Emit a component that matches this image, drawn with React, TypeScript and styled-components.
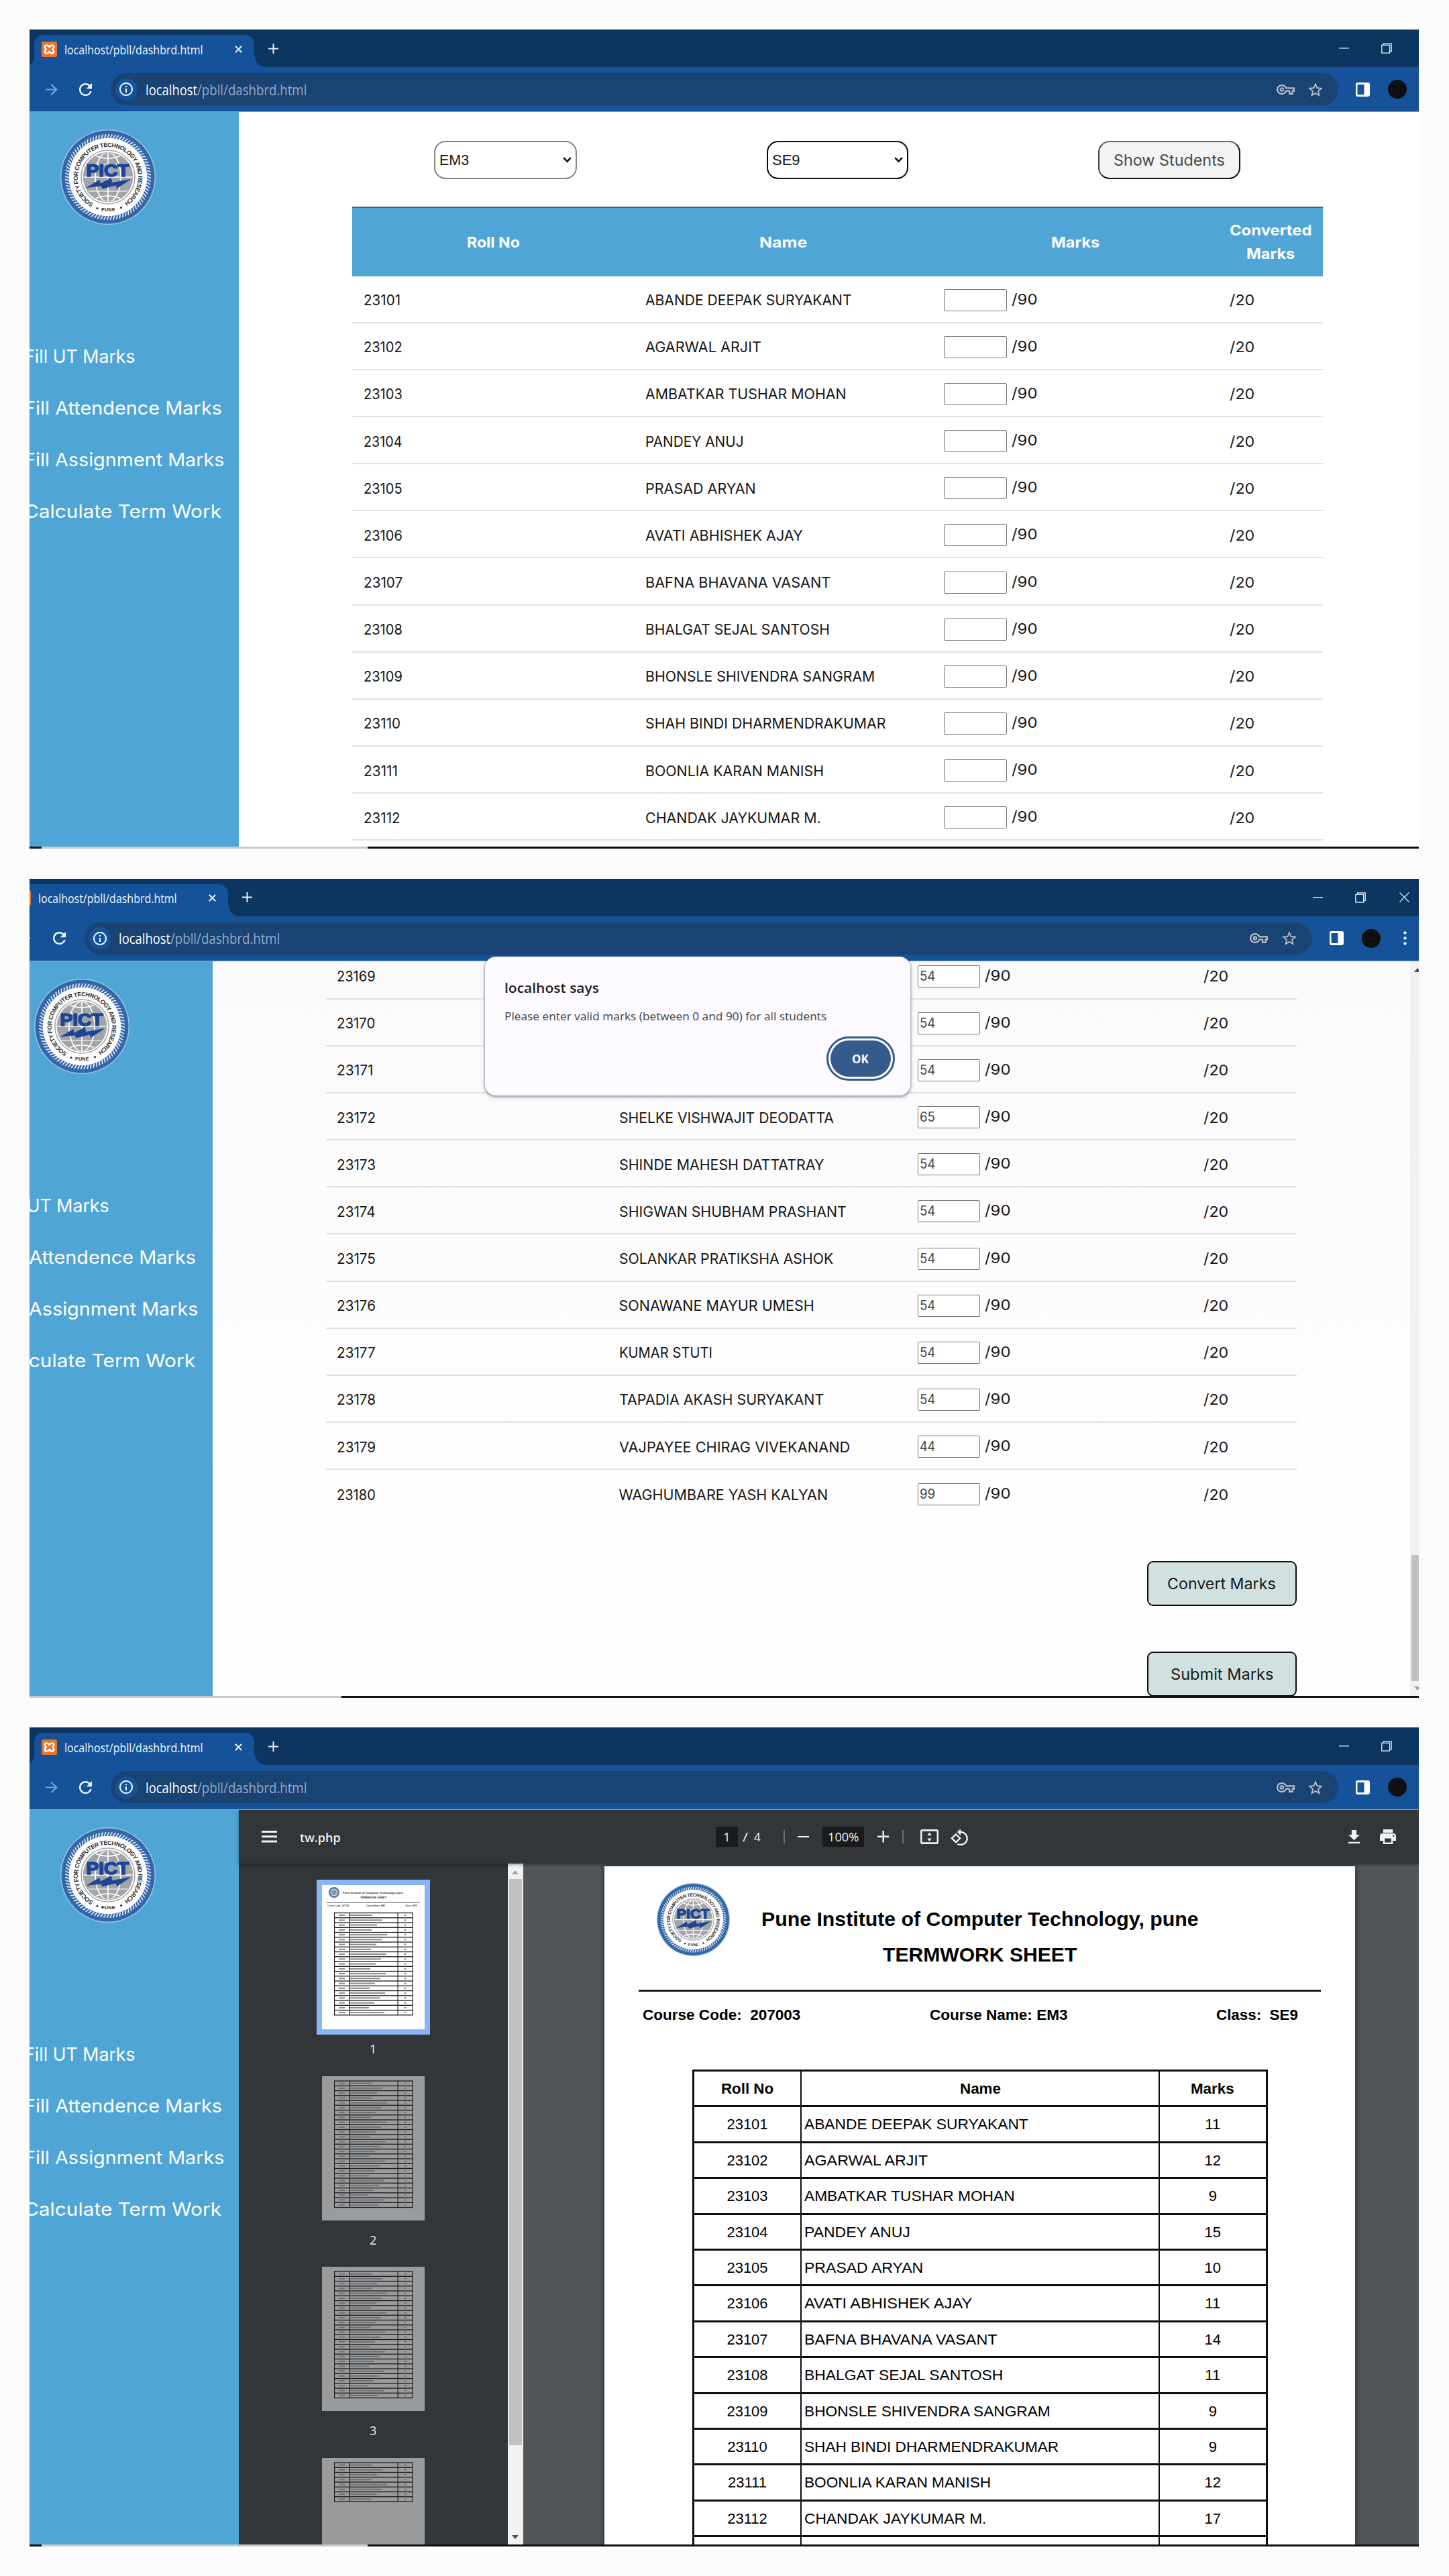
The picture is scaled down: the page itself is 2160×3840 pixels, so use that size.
import React, { useLayoutEffect, useRef, useState } from "react";
import styled, { createGlobalStyle } from "styled-components";

const geo = `Inter, "Open Sans", sans-serif`;
const ui = `"Open Sans", "Noto Sans", sans-serif`;
const arial = `"Liberation Sans", Arial, sans-serif`;

const GlobalStyle = createGlobalStyle`
  * { box-sizing: border-box; }
  body { margin: 0; background: #fcfcfc; }
`;

/* ---------- text that is stretched to a given width ---------- */

const FitSpan = styled.span<{ $w: number }>`
  display: inline-block;
  flex: none;
  width: ${(p) => p.$w}px;
  text-align: left;
  white-space: pre;
`;

const Stretch = styled.span`
  display: inline-block;
  transform-origin: 0 50%;
`;

function Fit({ w, children }: { w: number; children: string }) {
  const ref = useRef<HTMLSpanElement>(null);
  const [scale, setScale] = useState(1);
  useLayoutEffect(() => {
    if (ref.current && ref.current.offsetWidth) setScale(w / ref.current.offsetWidth);
  }, [w, children]);
  return (
    <FitSpan $w={w}>
      <Stretch ref={ref} style={{ transform: `scaleX(${scale})` }}>
        {children}
      </Stretch>
    </FitSpan>
  );
}

/* ---------- icons ---------- */

const Svg = styled.svg`
  display: block;
  flex: none;
`;

function Icon({ d, w, h, box, color }: { d: string; w: number; h: number; box: string; color: string }) {
  return (
    <Svg width={w} height={h} viewBox={box} preserveAspectRatio="none" fill={color}>
      <path d={d} />
    </Svg>
  );
}

const ARROW = "M12 4l-1.41 1.41L16.17 11H4v2h12.17l-5.58 5.59L12 20l8-8z";
const REFRESH =
  "M17.65 6.35C16.2 4.9 14.21 4 12 4c-4.42 0-7.99 3.58-7.99 8s3.57 8 7.99 8c3.73 0 6.84-2.55 7.73-6h-2.08c-.82 2.33-3.04 4-5.65 4-3.31 0-6-2.69-6-6s2.69-6 6-6c1.66 0 3.14.69 4.22 1.78L13 11h7V4l-2.35 2.35z";
const INFO =
  "M11 7h2v2h-2zm0 4h2v6h-2zm1-9C6.48 2 2 6.48 2 12s4.48 10 10 10 10-4.48 10-10S17.52 2 12 2zm0 18c-4.41 0-8-3.59-8-8s3.59-8 8-8 8 3.59 8 8-3.59 8-8 8z";
const KEY =
  "M22 19h-6v-4h-2.68c-1.14 2.42-3.6 4-6.32 4-3.86 0-7-3.14-7-7s3.14-7 7-7c2.72 0 5.17 1.58 6.32 4H24v6h-2v4zm-4-2h2v-4h2v-2H11.94l-.23-.67C11.01 8.34 9.11 7 7 7c-2.76 0-5 2.24-5 5s2.24 5 5 5c2.11 0 4.01-1.34 4.71-3.33l.23-.67H18v4zM7 15c-1.65 0-3-1.35-3-3s1.35-3 3-3 3 1.35 3 3-1.35 3-3 3zm0-4c-.55 0-1 .45-1 1s.45 1 1 1 1-.45 1-1-.45-1-1-1z";
const STAR =
  "M22 9.24l-7.19-.62L12 2 9.19 8.63 2 9.24l5.46 4.73L5.82 21 12 17.27 18.18 21l-1.63-7.03L22 9.24zM12 15.4l-3.76 2.27 1-4.28-3.32-2.88 4.38-.38L12 6.1l1.71 4.04 4.38.38-3.32 2.88 1 4.28L12 15.4z";
const PANEL = "M0 3a3 3 0 0 1 3-3h15a3 3 0 0 1 3 3v15a3 3 0 0 1-3 3h-15a3 3 0 0 1-3-3zM2.5 3v15h10V3z";
const ROTATE =
  "M7.34 6.41L.86 12.9l6.49 6.48 6.49-6.48-6.5-6.49zM3.69 12.9l3.66-3.66L11 12.9l-3.66 3.66-3.65-3.66zm15.67-6.26C17.61 4.88 15.3 4 13 4V.76L8.76 5 13 9.24V6c1.79 0 3.58.68 4.95 2.05 2.73 2.73 2.73 7.17 0 9.9C16.58 19.32 14.79 20 13 20c-.97 0-1.94-.21-2.84-.61l-1.49 1.49C10.02 21.62 11.51 22 13 22c2.3 0 4.61-.88 6.36-2.64 3.52-3.51 3.52-9.21 0-12.72z";
const PRINT =
  "M19 8H5c-1.66 0-3 1.34-3 3v6h4v4h12v-4h4v-6c0-1.66-1.34-3-3-3zm-3 11H8v-5h8v5zm3-7c-.55 0-1-.45-1-1s.45-1 1-1 1 .45 1 1-.45 1-1 1zm-1-9H6v4h12V3z";
const DOWNLOAD = "M19 9h-4V3H9v6H5l7 7 7-7zM5 18v2h14v-2H5z";
const FITPAGE =
  "M3 0h22a3 3 0 0 1 3 3v16a3 3 0 0 1-3 3h-22a3 3 0 0 1-3-3v-16a3 3 0 0 1 3-3zM2.6 2.8v16.4h22.8V2.8zM14 4.5l3.4 4.5h-6.8zM14 18l3.4-4.5h-6.8z";

const ropeMarks = Array.from({ length: 84 }, (_, i) => i * (360 / 84));

function Seal({ size, id }: { size: number; id: string }) {
  return (
    <Svg width={size} height={size} viewBox="0 0 142 142">
      <defs>
        <path id={id} d="M49.2 110.4 A45 45 0 1 1 94.8 109.2" />
        <clipPath id={id + "g"}>
          <circle cx="71" cy="71" r="36.5" />
        </clipPath>
      </defs>
      <circle cx="71" cy="71" r="71" fill="#9cc4e2" />
      <circle cx="71" cy="71" r="69.5" fill="#3467a8" />
      {ropeMarks.map((a) => (
        <path key={a} d="M70 12.6 L72.6 7" stroke="#e6eef7" strokeWidth="1.700" transform={`rotate(${a} 71 71)`} />
      ))}
      <circle cx="71" cy="71" r="58.3" fill="#fff" />
      <circle cx="71" cy="71" r="40" fill="none" stroke="#a6a7a9" strokeWidth="1.6" />
      <circle cx="71" cy="71" r="37.3" fill="#a2a4a7" />
      <g clipPath={`url(#${id}g)`} fill="none" stroke="#fff" strokeWidth="1.7">
        <path d="M71 34v74M33 71h76" />
        <ellipse cx="71" cy="71" rx="19" ry="37" />
        <path d="M50 38Q71 48 92 38M50 104Q71 94 92 104" />
        <path d="M41 52h60M41 92h60" strokeWidth="1.200" />
      </g>
      <text fontFamily={arial} fontWeight="700" fontSize="9" fill="#2b2b30">
        <textPath href={`#${id}`} textLength="234" lengthAdjust="spacing">
          SOCIETY FOR COMPUTER TECHNOLOGY AND RESEARCH
        </textPath>
      </text>
      <text x="61" y="122" textLength="20.5" fontFamily={arial} fontWeight="700" fontSize="7.2" fill="#2b2b30">
        PUNE
      </text>
      <circle cx="55" cy="117.5" r="1.6" fill="#2b2b30" />
      <circle cx="90.5" cy="116.5" r="1.6" fill="#2b2b30" />
      <text
        x="38.5"
        y="69.5"
        textLength="64"
        lengthAdjust="spacingAndGlyphs"
        fontFamily={arial}
        fontWeight="700"
        fontSize="25.5"
        fill="#1d4596"
        stroke="#1d4596"
        strokeWidth="1.6"
      >
        PICT
      </text>
      <path
        d="M39.500 86.500L58 75.500 59.500 81 75.500 72.500 77 79.500 104 74.500 84.500 87.500 83 83 62.500 88 61 84Z"
        fill="#1d4596"
        stroke="#1d4596"
        strokeWidth="0.800"
      />
    </Svg>
  );
}

/* ---------- browser window ---------- */

const Page = styled.main`
  width: 2160px;
  height: 3840px;
  padding: 44px 0 0 44px;
  display: flex;
  flex-direction: column;
  gap: 44.5px;
  overflow: hidden;
  background: #fcfcfc;
`;

const Frame = styled.section<{ $h: number }>`
  position: relative;
  width: 2071px;
  height: ${(p) => p.$h}px;
  overflow: hidden;
  display: flex;
  flex-direction: column;
`;

const Window = styled.div<{ $shift: number }>`
  width: 2120px;
  margin-left: ${(p) => -p.$shift}px;
  flex: 1;
  min-height: 0;
  display: flex;
  flex-direction: column;
`;

const TabStrip = styled.div`
  height: 56px;
  flex: none;
  display: flex;
  align-items: flex-end;
  background: #0c3560;
  padding-right: 24px;
`;

const TabFoot = styled.i<{ $side: "left" | "right" }>`
  width: ${(p) => (p.$side === "left" ? 7 : 17)}px;
  height: 16px;
  background: radial-gradient(
    circle at ${(p) => (p.$side === "left" ? "-9px 0" : "100% 0")},
    #0c3560 15.5px,
    #15529a 16.5px
  );
`;

const Tab = styled.div`
  width: 328px;
  height: 48px;
  padding: 0 0 6px 11px;
  display: flex;
  align-items: center;
  border-radius: 14px 14px 0 0;
  background: #15529a;
  color: #f2f6fb;
  font: 400 18.5px ${ui};
`;

const TabTitle = styled.div`
  margin: 0 47px 0 11px;
`;

const StripSlot = styled.div<{ $ml: number }>`
  height: 56px;
  margin-left: ${(p) => p.$ml}px;
  display: flex;
  align-items: center;
`;

const Grow = styled.div`
  flex: 1;
`;

const Toolbar = styled.div`
  height: 67px;
  flex: none;
  display: flex;
  align-items: center;
  padding: 0 28px 0 23.5px;
  background: #15529a;
  border-bottom: 1.5px solid #7f9fd0;
`;

const Omnibox = styled.div`
  width: 1830px;
  height: 48px;
  margin-left: 28px;
  padding: 0 23px 0 6.5px;
  display: flex;
  align-items: center;
  border-radius: 24px;
  background: #194373;
  font: 400 21.5px ${ui};
`;

const InfoDisc = styled.div`
  width: 33px;
  height: 33px;
  margin-right: 12px;
  border-radius: 50%;
  background: #15529a;
  display: flex;
  align-items: center;
  justify-content: center;
`;

const Host = styled.span`
  color: #fff;
`;

const Path = styled.span`
  color: #93aaca;
`;

const Gap = styled.i<{ $w: number }>`
  flex: none;
  width: ${(p) => p.$w}px;
`;

const Avatar = styled.div`
  width: 28px;
  height: 28px;
  border-radius: 50%;
  background: #0e0f10;
  color: #3a3a3a;
  font: 10px/27px ${arial};
  text-align: center;
  letter-spacing: 2px;
`;

function Favicon() {
  return (
    <Svg width="23" height="23" viewBox="0 0 23 23">
      <rect width="23" height="23" rx="2" fill="#e9762b" />
      <path
        d="M11.500 8.200C10 4.600 4.800 4.400 4.800 8c0 2 1.900 2.700 1.900 3.500S4.800 13 4.800 15c0 3.600 5.200 3.400 6.700-.2 1.500 3.600 6.700 3.800 6.700.2 0-2-1.900-2.700-1.900-3.500s1.900-1.500 1.900-3.500c0-3.600-5.200-3.400-6.700.2z"
        fill="none"
        stroke="#fff"
        strokeWidth="2.500"
        strokeLinejoin="round"
      />
    </Svg>
  );
}

function Chrome() {
  return (
    <>
      <TabStrip>
        <TabFoot $side="left" />
        <Tab>
          <Favicon />
          <TabTitle>
            <Fit w={207}>localhost/pbll/dashbrd.html</Fit>
          </TabTitle>
          <Svg width="11" height="11" viewBox="0 0 11 11">
            <path d="M.8.8l9.400 9.400M10.200.8L.8 10.200" stroke="#e8eff8" strokeWidth="2" />
          </Svg>
        </Tab>
        <TabFoot $side="right" />
        <StripSlot $ml={4}>
          <Svg width="15" height="15" viewBox="0 0 15 15">
            <path d="M7.500 0v15M0 7.500h15" stroke="#e8eff8" strokeWidth="2" />
          </Svg>
        </StripSlot>
        <Grow />
        <StripSlot $ml={0}>
          <Svg width="15" height="2" viewBox="0 0 15 2">
            <path d="M0 .8h15" stroke="#dfe6ee" strokeWidth="1.400" />
          </Svg>
        </StripSlot>
        <StripSlot $ml={48}>
          <Svg width="16" height="16" viewBox="0 0 16 16" fill="none" stroke="#e6ecf3" strokeWidth="1.300">
            <rect x=".8" y="3.200" width="11.800" height="11.800" />
            <path d="M3.500 3V.8h11.700v11.700h-2.500" />
          </Svg>
        </StripSlot>
        <StripSlot $ml={50}>
          <Svg width="15" height="15" viewBox="0 0 15 15">
            <path d="M.5.5l14 14M14.500.5l-14 14" stroke="#d5dee8" strokeWidth="1.400" />
          </Svg>
        </StripSlot>
      </TabStrip>
      <Toolbar>
        <Icon d={ARROW} w={18} h={17} box="4 4 16 16" color="#7ba0d2" />
        <Gap $w={32.5} />
        <Icon d={REFRESH} w={19} h={19} box="4 4 16 16" color="#f4f8fd" />
        <Omnibox>
          <InfoDisc>
            <Icon d={INFO} w={20} h={20} box="2 2 20 20" color="#f4f8fd" />
          </InfoDisc>
          <Host>
            <Fit w={77}>localhost</Fit>
          </Host>
          <Path>
            <Fit w={163}>/pbll/dashbrd.html</Fit>
          </Path>
          <Grow />
          <Icon d={KEY} w={27} h={15} box="0 5 24 14" color="#b9bec6" />
          <Gap $w={20.5} />
          <Icon d={STAR} w={22} h={21} box="2 2 20 19" color="#b9bec6" />
        </Omnibox>
        <Gap $w={26} />
        <Icon d={PANEL} w={21} h={21} box="0 0 21 21" color="#fff" />
        <Gap $w={27} />
        <Avatar>····</Avatar>
        <Gap $w={34} />
        <Svg width="5" height="21" viewBox="0 0 5 21" fill="#e4ecf7">
          <circle cx="2.500" cy="2.500" r="2.200" />
          <circle cx="2.500" cy="10.500" r="2.200" />
          <circle cx="2.500" cy="18.500" r="2.200" />
        </Svg>
      </Toolbar>
    </>
  );
}

const Body = styled.div`
  flex: 1;
  min-height: 0;
  display: flex;
  overflow: hidden;
  background: #fff;
`;

const Sidebar = styled.aside`
  width: 312px;
  flex: none;
  padding: 26px 0 0;
  background: #4fa5d5;
`;

const SealBox = styled.div`
  padding-left: 46px;
`;

const Menu = styled.nav`
  margin: 158px 0 0 -8px;
  display: flex;
  flex-direction: column;
  color: #fff;
  font: 400 27.5px/77px ${geo};
`;

const MenuItem = styled.a`
  height: 77px;
  white-space: nowrap;
`;

function SideNav({ id }: { id: string }) {
  return (
    <Sidebar>
      <SealBox>
        <Seal size={142} id={id} />
      </SealBox>
      <Menu>
        <MenuItem>
          <Fit w={166}>Fill UT Marks</Fit>
        </MenuItem>
        <MenuItem>
          <Fit w={295}>Fill Attendence Marks</Fit>
        </MenuItem>
        <MenuItem>
          <Fit w={299}>Fill Assignment Marks</Fit>
        </MenuItem>
        <MenuItem>
          <Fit w={294}>Calculate Term Work</Fit>
        </MenuItem>
      </Menu>
    </Sidebar>
  );
}

const Taskbar = styled.div`
  height: 3px;
  flex: none;
  display: flex;
  background: #0c0f12;
`;

const TaskSegment = styled.i<{ $w: number; $c: string }>`
  width: ${(p) => p.$w}px;
  background: ${(p) => p.$c};
`;

function TaskEdge({ shift = 0 }: { shift?: number }) {
  return (
    <Taskbar>
      <TaskSegment $w={Math.max(0, 18 - shift)} $c="#0c0f12" />
      <TaskSegment $w={486 - Math.max(0, shift - 18)} $c="#c9cacc" />
    </Taskbar>
  );
}

/* ---------- marks form ---------- */

const Main = styled.div<{ $tint?: boolean }>`
  flex: 1;
  min-width: 0;
  background: ${(p) => (p.$tint ? "linear-gradient(#fafafa, #fefefe 75%)" : "#fff")};
`;

const Filters = styled.div`
  display: flex;
  gap: 283.5px;
  padding: 43px 0 0 291px;
  height: 141px;
`;

const Select = styled.div<{ $strong?: boolean }>`
  width: ${(p) => (p.$strong ? 210.5 : 212.5)}px;
  height: 57px;
  padding: 0 6px;
  display: flex;
  align-items: center;
  justify-content: space-between;
  border: ${(p) => (p.$strong ? "2.5px solid #0c0c0c" : "2px solid #858585")};
  border-radius: 17px;
  background: #fff;
  color: #161616;
  font: 400 22.5px ${arial};
`;

const ShowButton = styled.button`
  width: 212px;
  height: 57px;
  padding: 0;
  border: 2.5px solid;
  border-color: #666 #111 #111 #444;
  border-radius: 17px;
  background: #f3f3f3;
  color: #484848;
  font: 400 22.5px ${geo};
`;

const Table = styled.div<{ $pull?: number }>`
  width: 1447px;
  margin: ${(p) => -(p.$pull ?? 0)}px 0 0 169px;
`;

const columns = "grid-template-columns: 420.5px 443px 428px 155.5px;";

const HeadRow = styled.div`
  display: grid;
  ${columns}
  height: 103.5px;
  align-items: center;
  border-top: 2px solid #42617a;
  background: #4fa5d5;
  color: #fff;
  font: 700 21.5px/34.5px ${geo};
  text-align: center;
`;

const Row = styled.div<{ $last?: boolean }>`
  display: grid;
  ${columns}
  height: 70.17px;
  padding-top: 3px;
  align-items: center;
  border-bottom: ${(p) => (p.$last ? "0" : "2px solid #e2e2e2")};
  color: #161616;
  font: 400 21.5px ${geo};
`;

const Cell = styled.div`
  padding-left: 16.5px;
  display: flex;
  align-items: center;
`;

const Field = styled.div`
  width: 93.5px;
  height: 33px;
  margin: 0 7px 0 2px;
  padding-left: 2px;
  border: 1.5px solid #767676;
  border-radius: 2px;
  background: #fff;
  color: #444;
  font: 400 19.5px/30px ${geo};
`;

const OutOf = styled.span<{ $raise?: boolean }>`
  font-size: 22px;
  padding-bottom: ${(p) => (p.$raise ? 3 : 0)}px;
`;

type Student = [roll: string, name: string, width: number, mark?: string];

function StudentRow({ s, last }: { s: Student; last?: boolean }) {
  const [roll, name, width, mark] = s;
  const rollWidth = 61 - (roll.slice(2).match(/1/g) || []).length * 3.2;
  return (
    <Row $last={last}>
      <Cell>
        <Fit w={rollWidth}>{roll}</Fit>
      </Cell>
      <Cell>
        <Fit w={width}>{name}</Fit>
      </Cell>
      <Cell>
        <Field>{mark ? <Fit w={23}>{mark}</Fit> : null}</Field>
        <OutOf $raise>
          <Fit w={38}>/90</Fit>
        </OutOf>
      </Cell>
      <Cell>
        <OutOf>
          <Fit w={37}>/20</Fit>
        </OutOf>
      </Cell>
    </Row>
  );
}

const firstPage: Student[] = [
  ["23101", "ABANDE DEEPAK SURYAKANT", 308],
  ["23102", "AGARWAL ARJIT", 173],
  ["23103", "AMBATKAR TUSHAR MOHAN", 300],
  ["23104", "PANDEY ANUJ", 147],
  ["23105", "PRASAD ARYAN", 165],
  ["23106", "AVATI ABHISHEK AJAY", 235],
  ["23107", "BAFNA BHAVANA VASANT", 276],
  ["23108", "BHALGAT SEJAL SANTOSH", 275],
  ["23109", "BHONSLE SHIVENDRA SANGRAM", 342],
  ["23110", "SHAH BINDI DHARMENDRAKUMAR", 358],
  ["23111", "BOONLIA KARAN MANISH", 266],
  ["23112", "CHANDAK JAYKUMAR M.", 262],
];

const lastPage: Student[] = [
  ["23169", "", 10, "54"],
  ["23170", "", 10, "54"],
  ["23171", "", 10, "54"],
  ["23172", "SHELKE VISHWAJIT DEODATTA", 320, "65"],
  ["23173", "SHINDE MAHESH DATTATRAY", 306, "54"],
  ["23174", "SHIGWAN SHUBHAM PRASHANT", 339, "54"],
  ["23175", "SOLANKAR PRATIKSHA ASHOK", 319, "54"],
  ["23176", "SONAWANE MAYUR UMESH", 291, "54"],
  ["23177", "KUMAR STUTI", 139, "54"],
  ["23178", "TAPADIA AKASH SURYAKANT", 305, "54"],
  ["23179", "VAJPAYEE CHIRAG VIVEKANAND", 344, "44"],
  ["23180", "WAGHUMBARE YASH KALYAN", 312, "99"],
];

function Caret() {
  return (
    <Svg width="13" height="9" viewBox="0 0 13 9">
      <path d="M1.200 1.200l5.300 5.500 5.300-5.500" fill="none" stroke="#111" strokeWidth="2.600" />
    </Svg>
  );
}

const Actions = styled.div`
  display: flex;
  flex-direction: column;
  gap: 68px;
  width: 223px;
  margin: 66px 0 0 1393px;
`;

const ActionButton = styled.button`
  height: 67px;
  padding: 0;
  border: 2.5px solid #0b0e0e;
  border-radius: 9px;
  background: #d1e0e0;
  color: #15191a;
  font: 400 22.5px ${geo};
`;

const Scrollbar = styled.div<{ $w: number }>`
  width: ${(p) => p.$w}px;
  flex: none;
  padding: 0 2px;
  display: flex;
  flex-direction: column;
  align-items: center;
  background: #f1f1f1;
`;

const Thumb = styled.i<{ $mt: number; $h: number }>`
  width: 100%;
  height: ${(p) => p.$h}px;
  margin-top: ${(p) => p.$mt}px;
  background: #c1c1c1;
`;

const Arrow = styled.i<{ $mt: number; $dir: "up" | "down"; $c: string }>`
  margin-top: ${(p) => p.$mt}px;
  border: 5.5px solid transparent;
  border-${(p) => (p.$dir === "up" ? "bottom" : "top")}: 6px solid ${(p) => p.$c};
  border-${(p) => (p.$dir === "up" ? "top" : "bottom")}: 0;
`;

const Dialog = styled.div`
  position: absolute;
  left: 679px;
  top: 116.5px;
  width: 634px;
  height: 207px;
  padding: 32px 24px 24px 29px;
  display: flex;
  flex-direction: column;
  border-radius: 16px;
  background: #fdfbff;
  box-shadow: 0 1px 3px 1px rgba(60, 64, 90, 0.4), 0 3px 6px rgba(60, 64, 90, 0.25);
  font-family: ${ui};
`;

const DialogTitle = styled.div`
  color: #1e1e22;
  font-size: 20px;
  font-weight: 600;
  line-height: 30px;
`;

const DialogText = styled.div`
  margin-top: 14px;
  color: #3f4046;
  font-size: 17px;
  line-height: 26px;
`;

const OkButton = styled.button`
  align-self: flex-end;
  width: 90px;
  height: 54px;
  margin: 23px 5.5px 0 0;
  padding: 0;
  border: 0;
  border-radius: 27px;
  outline: 3px solid #355a8c;
  outline-offset: 3px;
  background: #355a8c;
  color: #fff;
  font: 700 17px ${ui};
`;

/* ---------- PDF viewer ---------- */

const Viewer = styled.div`
  flex: 1;
  min-width: 0;
  display: flex;
  flex-direction: column;
  background: #525659;
`;

const PdfBar = styled.div`
  height: 80px;
  flex: none;
  z-index: 1;
  display: flex;
  align-items: center;
  padding: 0 83px 0 34px;
  background: #323639;
  color: #f1f1f1;
  font: 400 19px ${ui};
  box-shadow: 0 2px 4px rgba(0, 0, 0, 0.35);
`;

const PdfTitle = styled.b`
  margin-left: 33.5px;
  font-weight: 600;
  font-size: 18.5px;
`;

const DarkBox = styled.div<{ $w: number }>`
  width: ${(p) => p.$w}px;
  height: 30px;
  display: flex;
  align-items: center;
  justify-content: center;
  background: #191b1c;
`;

const Divider = styled.i`
  width: 1.5px;
  height: 20px;
  background: #6b6f72;
`;

const PdfBody = styled.div`
  flex: 1;
  min-height: 0;
  display: flex;
  overflow: hidden;
`;

const Thumbs = styled.div`
  width: 400.5px;
  flex: none;
  padding-top: 24px;
  display: flex;
  flex-direction: column;
  align-items: center;
  background: #323639;
`;

const ThumbFrame = styled.div<{ $active?: boolean }>`
  flex: none;
  padding: 8px;
  background: ${(p) => (p.$active ? "#8ab4f8" : "transparent")};
`;

const ThumbLabel = styled.div`
  flex: none;
  height: 28px;
  margin: 7px 0 18.5px;
  color: #eceded;
  font: 400 18px/28px ${ui};
`;

function MiniPage({ rows, cover }: { rows: number; cover?: boolean }) {
  const top = cover ? 41.5 : 7;
  const step = 7.25;
  const ink = cover ? "#8a8a8a" : "#707274";
  const bottom = top + rows * step;
  return (
    <Svg width="153" height="215" viewBox="0 0 153 215">
      <rect width="153" height="215" fill={cover ? "#fff" : "#999b9d"} />
      {cover && (
        <g fontFamily={arial} fontWeight="700" fill="#222">
          <circle cx="18" cy="11" r="8" fill="#54779f" />
          <circle cx="18" cy="11" r="5.500" fill="#ccd4df" />
          <circle cx="18" cy="11" r="3.800" fill="#8792a5" />
          <text x="31" y="13" fontSize="4.200" textLength="90">
            Pune Institute of Computer Technology, pune
          </text>
          <text x="57" y="19.500" fontSize="4" textLength="39">
            TERMWORK SHEET
          </text>
          <rect x="7" y="25" width="139" height="1" fill="#444" />
          <text x="8" y="32" fontSize="2.800" textLength="32">
            Course Code: 207003
          </text>
          <text x="66" y="32" fontSize="2.800" textLength="28">
            Course Name: EM3
          </text>
          <text x="124" y="32" fontSize="2.800" textLength="17">
            Class: SE9
          </text>
        </g>
      )}
      {Array.from({ length: rows }, (_, i) => (
        <g key={i} fill={ink}>
          <rect x="25" y={top + i * step + 2.6} width="9" height="2" />
          <rect x="41" y={top + i * step + 2.6} width={34 + ((i * 17) % 23) - (i % 4) * 2} height="2" />
          <rect x="122.500" y={top + i * step + 2.6} width="3" height="2" />
        </g>
      ))}
      {Array.from({ length: rows + 1 }, (_, i) => (
        <rect key={i} x="18" y={top + i * step - 0.6} width="117.500" height="1.300" fill="#1b1c1d" />
      ))}
      {[18, 40, 112.5, 134.5].map((x) => (
        <rect key={x} x={x} y={top} width="1.100" height={bottom - top} fill="#1b1c1d" />
      ))}
    </Svg>
  );
}

const Sheet = styled.article`
  width: 1119px;
  flex: none;
  margin: 3.5px 0 0 121px;
  padding: 25px 51px 0;
  background: #fff;
  color: #000;
  font-family: ${arial};
  box-shadow: 0 0 8px rgba(0, 0, 0, 0.6);
`;

const SheetHead = styled.header`
  display: flex;
  height: 162.5px;
  padding-left: 26.5px;
  border-bottom: 3.5px solid #1a1a1a;
`;

const Titles = styled.div`
  margin: 27px 0 0 47px;
  width: 652px;
  display: flex;
  flex-direction: column;
  align-items: center;
  font: 700 30px/53px ${arial};
`;

const Facts = styled.div`
  display: flex;
  padding: 22px 0 0 6px;
  height: 116px;
  font: 700 22px/26px ${arial};
  white-space: pre;
`;

const Grid = styled.div`
  width: 857.5px;
  margin-left: 80px;
  border: 3px solid #0c0c0c;
  border-bottom: 0;
`;

const GridRow = styled.div<{ $head?: boolean }>`
  display: grid;
  grid-template-columns: 160px 534px 1fr;
  height: 53.4px;
  border-bottom: 3px solid #0c0c0c;
  font: ${(p) => (p.$head ? 700 : 400)} 22px/51px ${arial};
  text-align: center;
`;

const GridCell = styled.div<{ $name?: boolean }>`
  border-right: 2.5px solid #0c0c0c;
  text-align: ${(p) => (p.$name ? "left" : "center")};
  padding-left: ${(p) => (p.$name ? 4 : 0)}px;
  &:last-child {
    border-right: 0;
  }
`;

const termMarks = [11, 12, 9, 15, 10, 11, 14, 11, 9, 9, 12, 17];
const pdfWidths = [334, 184, 314, 158, 177, 250, 287, 296, 367, 379, 278, 271];

function PdfViewer() {
  const pen = "#f1f1f1";
  return (
    <Viewer>
      <PdfBar>
        <Icon d="M0 0h23v3H0zM0 7.200h23v3H0zM0 14.400h23v3H0z" w={23} h={17.4} box="0 0 23 17.4" color={pen} />
        <PdfTitle>
          <Fit w={60.5}>tw.php</Fit>
        </PdfTitle>
        <Gap $w={560} />
        <DarkBox $w={33}>1</DarkBox>
        <Gap $w={7} />
        <Fit w={8}>/</Fit>
        <Gap $w={9} />
        <Fit w={10}>4</Fit>
        <Gap $w={34} />
        <Divider />
        <Gap $w={19.5} />
        <Icon d="M0 0h17v2.500H0z" w={17} h={2.5} box="0 0 17 2.5" color={pen} />
        <Gap $w={20} />
        <DarkBox $w={62}>
          <Fit w={46}>100%</Fit>
        </DarkBox>
        <Gap $w={19.5} />
        <Icon
          d="M7.500 0h2.500v7.500h7.500v2.500h-7.500v7.500h-2.500v-7.500h-7.500v-2.500h7.500z"
          w={17.5}
          h={17.5}
          box="0 0 17.5 17.5"
          color={pen}
        />
        <Gap $w={20} />
        <Divider />
        <Gap $w={25} />
        <Svg width={27} height={22} viewBox="0 0 28 22" preserveAspectRatio="none" fill={pen}>
          <path fillRule="evenodd" d={FITPAGE} />
        </Svg>
        <Gap $w={18} />
        <Icon d={ROTATE} w={26} h={25} box="0.8 0.7 21.3 21.3" color={pen} />
        <Grow />
        <Icon d={DOWNLOAD} w={17} h={20} box="5 3 14 17" color={pen} />
        <Gap $w={30.5} />
        <Icon d={PRINT} w={24} h={22} box="2 3 20 18" color={pen} />
      </PdfBar>
      <PdfBody>
        <Thumbs>
          <ThumbFrame $active>
            <MiniPage rows={21} cover />
          </ThumbFrame>
          <ThumbLabel>1</ThumbLabel>
          <ThumbFrame>
            <MiniPage rows={26} />
          </ThumbFrame>
          <ThumbLabel>2</ThumbLabel>
          <ThumbFrame>
            <MiniPage rows={26} />
          </ThumbFrame>
          <ThumbLabel>3</ThumbLabel>
          <ThumbFrame>
            <MiniPage rows={8} />
          </ThumbFrame>
        </Thumbs>
        <Scrollbar $w={23.5}>
          <Arrow $mt={10} $dir="up" $c="#a3a3a3" />
          <Thumb $mt={7} $h={844} />
          <Arrow $mt={134} $dir="down" $c="#505050" />
        </Scrollbar>
        <Sheet>
          <SheetHead>
            <Seal size={109} id="sealSheet" />
            <Titles>
              <Fit w={652}>Pune Institute of Computer Technology, pune</Fit>
              <Fit w={289}>TERMWORK SHEET</Fit>
            </Titles>
          </SheetHead>
          <Facts>
            <Fit w={235.5}>{"Course Code:  207003"}</Fit>
            <Gap $w={192.5} />
            <Fit w={206}>Course Name: EM3</Fit>
            <Gap $w={221} />
            <Fit w={122}>{"Class:  SE9"}</Fit>
          </Facts>
          <Grid>
            <GridRow $head>
              <GridCell>
                <Fit w={78}>Roll No</Fit>
              </GridCell>
              <GridCell>
                <Fit w={61}>Name</Fit>
              </GridCell>
              <GridCell>
                <Fit w={65}>Marks</Fit>
              </GridCell>
            </GridRow>
            {firstPage.map(([roll, name], i) => (
              <GridRow key={roll}>
                <GridCell>{roll}</GridCell>
                <GridCell $name>
                  <Fit w={pdfWidths[i]}>{name}</Fit>
                </GridCell>
                <GridCell>{termMarks[i]}</GridCell>
              </GridRow>
            ))}
            <GridRow>
              <GridCell />
              <GridCell />
              <GridCell />
            </GridRow>
          </Grid>
        </Sheet>
      </PdfBody>
    </Viewer>
  );
}

export default function App() {
  return (
    <Page>
      <GlobalStyle />
      <Frame $h={1221}>
        <Window $shift={0}>
          <Chrome />
          <Body>
            <SideNav id="sealA" />
            <Main>
              <Filters>
                <Select>
                  <Fit w={44}>EM3</Fit>
                  <Caret />
                </Select>
                <Select $strong>
                  <Fit w={42}>SE9</Fit>
                  <Caret />
                </Select>
                <ShowButton>
                  <Fit w={166}>Show Students</Fit>
                </ShowButton>
              </Filters>
              <Table>
                <HeadRow>
                  <div>
                    <Fit w={78.5}>Roll No</Fit>
                  </div>
                  <div>
                    <Fit w={71}>Name</Fit>
                  </div>
                  <div>
                    <Fit w={72}>Marks</Fit>
                  </div>
                  <div>
                    <Fit w={123}>Converted</Fit>
                    <br />
                    <Fit w={72}>Marks</Fit>
                  </div>
                </HeadRow>
                {firstPage.map((s) => (
                  <StudentRow key={s[0]} s={s} />
                ))}
              </Table>
            </Main>
          </Body>
        </Window>
        <TaskEdge />
      </Frame>

      <Frame $h={1221}>
        <Window $shift={39.5}>
          <Chrome />
          <Body>
            <SideNav id="sealB" />
            <Main $tint>
              <Table $pull={13}>
                {lastPage.map((s, i) => (
                  <StudentRow key={s[0]} s={s} last={i === lastPage.length - 1} />
                ))}
              </Table>
              <Actions>
                <ActionButton>
                  <Fit w={162}>Convert Marks</Fit>
                </ActionButton>
                <ActionButton>
                  <Fit w={153}>Submit Marks</Fit>
                </ActionButton>
              </Actions>
            </Main>
            <Scrollbar $w={23}>
              <Arrow $mt={10} $dir="up" $c="#505050" />
              <Thumb $mt={869} $h={188} />
              <Arrow $mt={8} $dir="down" $c="#a3a3a3" />
            </Scrollbar>
          </Body>
        </Window>
        <Dialog>
          <DialogTitle>
            <Fit w={140.5}>localhost says</Fit>
          </DialogTitle>
          <DialogText>
            <Fit w={480}>Please enter valid marks (between 0 and 90) for all students</Fit>
          </DialogText>
          <OkButton>
            <Fit w={25}>OK</Fit>
          </OkButton>
        </Dialog>
        <TaskEdge shift={39.5} />
      </Frame>

      <Frame $h={1221}>
        <Window $shift={0}>
          <Chrome />
          <Body>
            <SideNav id="sealC" />
            <PdfViewer />
          </Body>
        </Window>
        <TaskEdge />
      </Frame>
    </Page>
  );
}
